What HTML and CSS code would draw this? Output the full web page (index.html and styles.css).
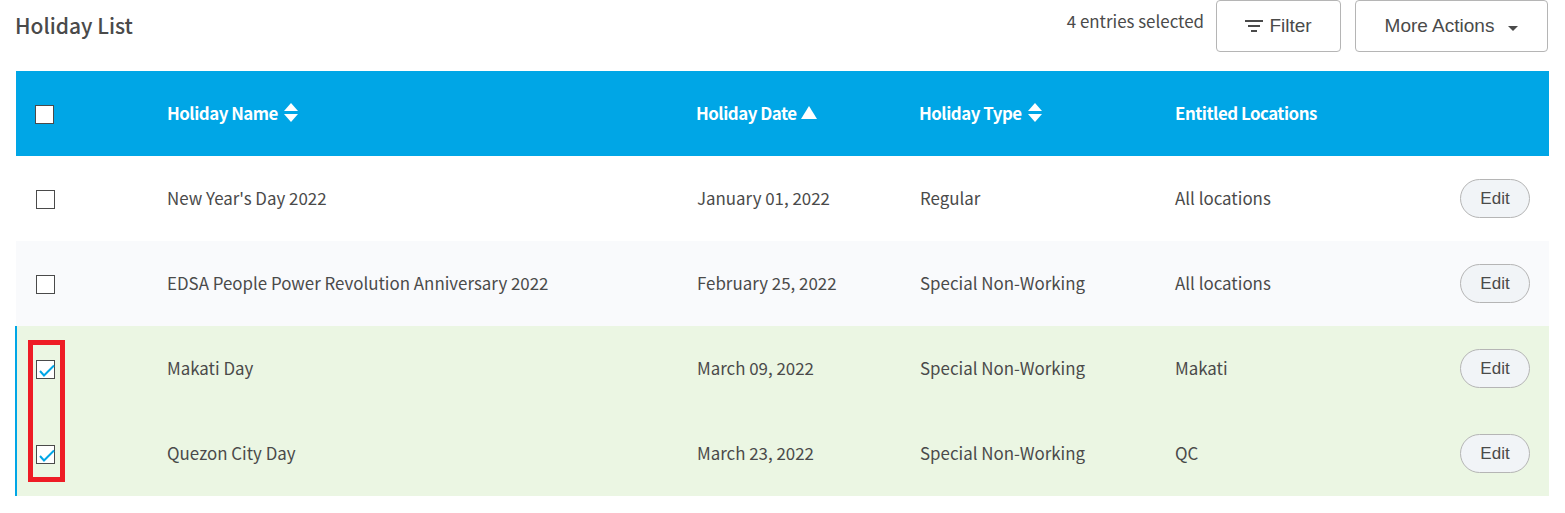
FILE: index.html
```html
<!DOCTYPE html>
<html lang="en">
<head>
    <meta charset="UTF-8">
    <meta name="viewport" content="width=device-width, initial-scale=1.0">
    <title>Holiday List</title>
    <link rel="stylesheet" href="styles.css">
</head>
<body>
    <div class="page">
        <div class="toolbar">
            <h1>Holiday List</h1>
            <div class="actions">
                <span class="selected-count">4 entries selected</span>
                <button class="btn btn-filter">
                    <svg width="18" height="12" viewBox="0 0 18 12"><path d="M0 1h18M3 6h12M6 11h6" stroke="#4a4a4a" stroke-width="2" fill="none"/></svg>
                    Filter
                </button>
                <button class="btn btn-more">
                    More Actions
                    <span class="caret"></span>
                </button>
            </div>
        </div>

        <table class="holiday-table">
            <colgroup>
                <col class="col-check">
                <col class="col-name">
                <col class="col-date">
                <col class="col-type">
                <col class="col-loc">
                <col class="col-edit">
            </colgroup>
            <thead>
                <tr>
                    <th><span class="box"></span></th>
                    <th><div class="th-inner">Holiday Name <span class="sort"><i class="up"></i><i class="down"></i></span></div></th>
                    <th><div class="th-inner th-sorted">Holiday Date <span class="sort"><i class="up big"></i></span></div></th>
                    <th><div class="th-inner">Holiday Type <span class="sort"><i class="up"></i><i class="down"></i></span></div></th>
                    <th class="nudge"><div class="th-inner">Entitled Locations</div></th>
                    <th></th>
                </tr>
            </thead>
            <tbody>
                <tr>
                    <td><span class="box"></span></td>
                    <td>New Year's Day 2022</td>
                    <td class="nudge">January 01, 2022</td>
                    <td class="nudge">Regular</td>
                    <td class="nudge">All locations</td>
                    <td><button class="btn-edit">Edit</button></td>
                </tr>
                <tr class="alt">
                    <td><span class="box"></span></td>
                    <td>EDSA People Power Revolution Anniversary 2022</td>
                    <td class="nudge">February 25, 2022</td>
                    <td class="nudge">Special Non-Working</td>
                    <td class="nudge">All locations</td>
                    <td><button class="btn-edit">Edit</button></td>
                </tr>
                <tr class="checked">
                    <td><span class="box"><svg class="tick" width="16" height="14" viewBox="0 0 16 14"><path d="M2 8l4 4.500L16 2.500" stroke="#00a6e6" stroke-width="2" fill="none"/></svg></span></td>
                    <td>Makati Day</td>
                    <td class="nudge">March 09, 2022</td>
                    <td class="nudge">Special Non-Working</td>
                    <td class="nudge">Makati</td>
                    <td><button class="btn-edit">Edit</button></td>
                </tr>
                <tr class="checked">
                    <td><span class="box"><svg class="tick" width="16" height="14" viewBox="0 0 16 14"><path d="M2 8l4 4.500L16 2.500" stroke="#00a6e6" stroke-width="2" fill="none"/></svg></span></td>
                    <td>Quezon City Day</td>
                    <td class="nudge">March 23, 2022</td>
                    <td class="nudge">Special Non-Working</td>
                    <td class="nudge">QC</td>
                    <td><button class="btn-edit">Edit</button></td>
                </tr>
            </tbody>
        </table>

        <!-- red annotation drawn over the screenshot -->
        <div class="callout"></div>
    </div>
</body>
</html>
```

FILE: styles.css
```css
html, body {
    margin: 0;
    background: #fff;
}

.page {
    position: relative;
    height: 513px;
    overflow: hidden;
    font-family: "Noto Sans CJK JP", "Noto Sans", sans-serif;
    color: #4a4a4a;
}

.toolbar {
    display: flex;
    justify-content: space-between;
    height: 71px;
    padding: 0 17px 0 15px;
    box-sizing: border-box;
}

h1 {
    margin: 8px 0 0;
    font-size: 21px;
    line-height: 34px;
    font-weight: 500;
}

.actions {
    display: flex;
    align-items: flex-start;
}

.selected-count {
    margin: 8px 12px 0 0;
    font-size: 16.9px;
    line-height: 26px;
}

.btn {
    height: 52px;
    background: #fff;
    border: 1px solid #b5b5b5;
    border-radius: 4px;
    font-family: "Liberation Sans", Arial, sans-serif;
    font-size: 19px;
    color: #4a4a4a;
    padding: 0;
    display: flex;
    align-items: center;
    justify-content: center;
    box-sizing: border-box;
}

.btn-filter {
    width: 125px;
    gap: 6px;
    margin-right: 14px;
}

.btn-more {
    width: 193px;
    gap: 14px;
}

.caret {
    width: 0;
    height: 0;
    border-left: 5.500px solid transparent;
    border-right: 5.500px solid transparent;
    border-top: 5px solid #4a4a4a;
    margin-top: 4px;
}

.holiday-table {
    width: 1533px;
    margin-left: 16px;
    border-collapse: collapse;
    table-layout: fixed;
    font-size: 16.9px;
}

.col-check { width: 151px; }
.col-name { width: 529px; }
.col-date { width: 223px; }
.col-type { width: 255px; }
.col-edit { width: 89px; }

.holiday-table th,
.holiday-table td {
    padding: 0 0 2px;
    text-align: left;
    height: 85px;
    box-sizing: border-box;
    vertical-align: middle;
}

.holiday-table th {
    background: #00a6e6;
    color: #fff;
    font-weight: 700;
    letter-spacing: -0.5px;
    white-space: nowrap;
}

.holiday-table .nudge {
    padding-left: 1px;
}

.th-inner {
    display: flex;
    align-items: center;
    gap: 6px;
}

.th-sorted {
    gap: 4px;
}

.holiday-table th:first-child {
    padding: 0 0 4px 19px;
}

.holiday-table td:first-child {
    padding-left: 20px;
    line-height: 0;
}

.holiday-table td:first-child .box {
    margin-top: 4px;
}

.holiday-table td:last-child {
    padding: 0;
}

.alt td {
    background: #f9fafc;
}

.checked td {
    background: #ebf6e3;
}

.checked td:first-child {
    box-shadow: -1px 0 0 #00a6e6, inset 1px 0 0 #00a6e6;
}

.box {
    display: inline-flex;
    align-items: center;
    justify-content: center;
    width: 19px;
    height: 19px;
    box-sizing: border-box;
    border: 1px solid #4a4a4a;
    background: #fff;
    vertical-align: middle;
}

.tick {
    flex: none;
    overflow: visible;
}

.sort {
    display: flex;
    flex-direction: column;
    gap: 3px;
}

.sort i {
    display: block;
    width: 0;
    height: 0;
    border-left: 7px solid transparent;
    border-right: 7px solid transparent;
}

.sort .up {
    border-bottom: 8px solid #fff;
}

.sort .down {
    border-top: 8px solid #fff;
}

.sort .big {
    border-left-width: 8px;
    border-right-width: 8px;
    border-bottom-width: 13px;
}

.btn-edit {
    width: 70px;
    height: 39px;
    background: #f1f4f7;
    border: 1px solid #b5b5b5;
    border-radius: 20px;
    font-family: "Liberation Sans", Arial, sans-serif;
    font-size: 17px;
    color: #4a4a4a;
    padding: 0;
    display: block;
}

.callout {
    position: absolute;
    left: 28px;
    top: 340px;
    width: 37px;
    height: 142px;
    box-sizing: border-box;
    border: 5px solid #ee1c25;
}
```
